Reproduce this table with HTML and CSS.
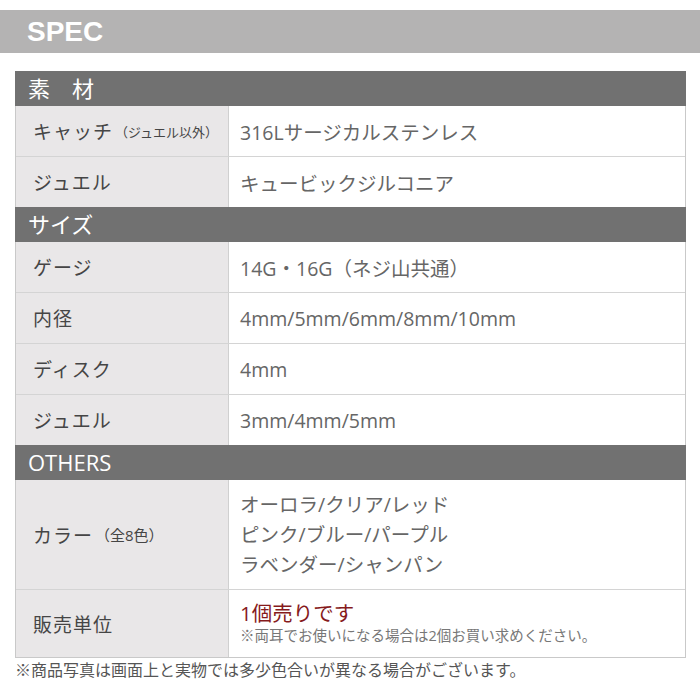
FILE: index.html
```html
<!DOCTYPE html>
<html lang="ja">
<head>
<meta charset="utf-8">
<link rel="stylesheet" href="styles.css">
</head>
<body>
<div class="title-bar">SPEC</div>
<div class="spec">
  <div class="sec-head">素　材</div>
  <div class="row">
    <div class="label">キャッチ<span class="small">（ジュエル以外）</span></div>
    <div class="value">316Lサージカルステンレス</div>
  </div>
  <div class="row">
    <div class="label">ジュエル</div>
    <div class="value">キュービックジルコニア</div>
  </div>
  <div class="sec-head">サイズ</div>
  <div class="row">
    <div class="label">ゲージ</div>
    <div class="value">14G・16G（ネジ山共通）</div>
  </div>
  <div class="row">
    <div class="label">内径</div>
    <div class="value">4mm/5mm/6mm/8mm/10mm</div>
  </div>
  <div class="row">
    <div class="label">ディスク</div>
    <div class="value">4mm</div>
  </div>
  <div class="row">
    <div class="label">ジュエル</div>
    <div class="value">3mm/4mm/5mm</div>
  </div>
  <div class="sec-head latin">OTHERS</div>
  <div class="row tall">
    <div class="label">カラー<span class="small mid">（全8色）</span></div>
    <div class="value lines">
      <div>オーロラ/クリア/レッド</div>
      <div>ピンク/ブルー/パープル</div>
      <div>ラベンダー/シャンパン</div>
    </div>
  </div>
  <div class="row unit">
    <div class="label">販売単位</div>
    <div class="value stack">
      <div class="red">1個売りです</div>
      <div class="note">※両耳でお使いになる場合は2個お買い求めください。</div>
    </div>
  </div>
</div>
<p class="footer">※商品写真は画面上と実物では多少色合いが異なる場合がございます。</p>
</body>
</html>
```

FILE: styles.css
```css
* { box-sizing: border-box; }
html, body { margin: 0; padding: 0; background: #fff; }
body {
  font-family: "Open Sans", "Noto Sans CJK JP", sans-serif;
  color: #666;
}
.title-bar {
  margin-top: 10px;
  height: 43px;
  background: #b4b3b3;
  color: #fff;
  font-family: "Liberation Sans", Arial, sans-serif;
  font-weight: bold;
  font-size: 28px;
  line-height: 43px;
  padding-left: 27px;
}
.spec {
  margin: 18px 0 0 15px;
  width: 671px;
  border: 1px solid #c9c9c9;
  border-top: none;
}
.sec-head {
  height: 35px;
  background: #717171;
  color: #fff;
  font-size: 22px;
  line-height: 35px;
  margin: 0 -1px;
  padding-left: 13px;
}
.row {
  display: grid;
  grid-template-columns: 213px 1fr;
  height: 50px;
}
.row + .row { height: 51px; border-top: 1px solid #d4d4d4; }
.row.tall { height: 109px; }
.row.unit { height: 68px; }
.label {
  background: #e9e7e8;
  border-right: 1px solid #d0d0d0;
  display: flex;
  align-items: center;
  padding-left: 17px;
  font-size: 19px;
  letter-spacing: 1px;
  color: #454545;
  font-weight: 400;
}
.small {
  font-size: 13px;
  letter-spacing: 0;
  margin-left: 2px;
}
.small.mid { font-size: 15px; }
.value {
  display: flex;
  align-items: center;
  padding-left: 11px;
  font-size: 19.5px;
  color: #666;
}
.value.lines {
  flex-direction: column;
  align-items: flex-start;
  justify-content: center;
  line-height: 30px;
  padding-top: 1px;
}
.value.stack {
  flex-direction: column;
  align-items: flex-start;
  justify-content: center;
  padding-bottom: 2px;
}
.red {
  color: #861a1c;
  font-size: 20.5px;
  line-height: 26px;
}
.note {
  font-size: 14.5px;
  line-height: 20px;
  color: #777;
}
.footer {
  margin: 2px 0 0 15px;
  font-size: 16px;
  line-height: 20px;
  color: #555;
}
```
